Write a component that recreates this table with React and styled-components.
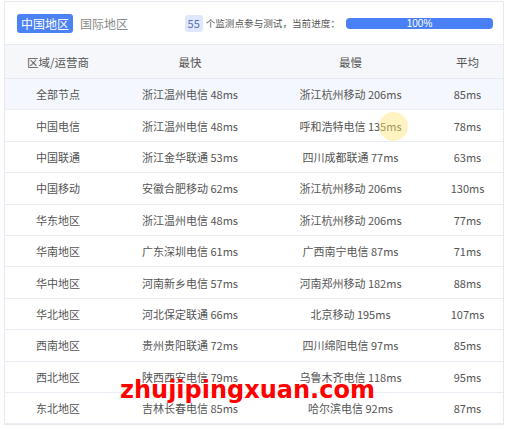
import React from 'react'
import styled, { createGlobalStyle } from 'styled-components'

const rows = [
  ['全部节点', '浙江温州电信 48ms', '浙江杭州移动 206ms', '85ms'],
  ['中国电信', '浙江温州电信 48ms', '呼和浩特电信 135ms', '78ms'],
  ['中国联通', '浙江金华联通 53ms', '四川成都联通 77ms', '63ms'],
  ['中国移动', '安徽合肥移动 62ms', '浙江杭州移动 206ms', '130ms'],
  ['华东地区', '浙江温州电信 48ms', '浙江杭州移动 206ms', '77ms'],
  ['华南地区', '广东深圳电信 61ms', '广西南宁电信 87ms', '71ms'],
  ['华中地区', '河南新乡电信 57ms', '河南郑州移动 182ms', '88ms'],
  ['华北地区', '河北保定联通 66ms', '北京移动 195ms', '107ms'],
  ['西南地区', '贵州贵阳联通 72ms', '四川绵阳电信 97ms', '85ms'],
  ['西北地区', '陕西西安电信 79ms', '乌鲁木齐电信 118ms', '95ms'],
  ['东北地区', '吉林长春电信 85ms', '哈尔滨电信 92ms', '87ms'],
]

const App = () => {
  return (
    <>
      <Global />
      <Card>
        <TopBar>
          <Tab active>中国地区</Tab>
          <Tab>国际地区</Tab>
          <Status>
            <Badge>55</Badge>
            <StatusText>个监测点参与测试，当前进度：</StatusText>
            <Progress>100%</Progress>
          </Status>
        </TopBar>
        <HeadRow>
          <Cell>区域/运营商</Cell>
          <Cell>最快</Cell>
          <Cell>最慢</Cell>
          <Cell>平均</Cell>
        </HeadRow>
        {rows.map((r, i) => (
          <Row key={i} highlight={i === 0}>
            {r.map((c, j) => <Cell key={j}>{c}</Cell>)}
          </Row>
        ))}
        <Cursor />
        <Watermark>zhujipingxuan.com</Watermark>
      </Card>
    </>
  )
}

const Global = createGlobalStyle`
  body {
    margin: 0;
    background: #fff;
    font-family: "Noto Sans CJK SC", "Noto Sans", sans-serif;
  }
`

const Card = styled.div`
  position: relative;
  box-sizing: border-box;
  width: 500px;
  margin: 1px 0 0 4px;
  border: 1px solid #e6eaf0;
  background: #fff;
`

const TopBar = styled.div`
  display: flex;
  align-items: center;
  height: 42px;
  padding: 0 10px 0 12px;
  border-bottom: 1px solid #e8edf3;
`

const Tab = styled.div`
  height: 19px;
  line-height: 19px;
  padding: 0 4px;
  margin-right: 3px;
  border-radius: 3px;
  font-size: 12px;
  background: ${p => p.active ? '#4b82f6' : 'transparent'};
  color: ${p => p.active ? '#fff' : '#8a8a8a'};
`

const Status = styled.div`
  display: flex;
  align-items: center;
  margin-left: auto;
`

const Badge = styled.div`
  width: 18px;
  height: 17px;
  line-height: 17px;
  text-align: center;
  border-radius: 3px;
  background: #dfe8fb;
  color: #5872b8;
  font-size: 11px;
`

const StatusText = styled.div`
  margin-left: 3px;
  font-size: 9.6px;
  color: #555;
`

const Progress = styled.div`
  width: 147px;
  height: 11px;
  line-height: 11px;
  margin-left: 6px;
  border-radius: 4px;
  background: #4a80f5;
  color: #fff;
  text-align: center;
  font-size: 10px;
  font-family: "Liberation Sans", sans-serif;
`

const HeadRow = styled.div`
  display: grid;
  grid-template-columns: 106px 158px 163px 1fr;
  align-items: center;
  height: 33px;
  background: #f5f7fa;
  border-bottom: 1px solid #e6ebf1;
  color: #555;
  font-size: 11.5px;
`

const Row = styled.div`
  display: grid;
  grid-template-columns: 106px 158px 163px 1fr;
  align-items: center;
  height: 30.4px;
  border-bottom: 1px solid #e8edf3;
  background: ${p => p.highlight ? '#f4f7fd' : '#fff'};
  color: #555;
  font-size: 11px;
  &:last-of-type {
    border-bottom: none;
  }
`

const Cell = styled.div`
  text-align: center;
  white-space: nowrap;
`

const Cursor = styled.div`
  position: absolute;
  left: 374px;
  top: 110px;
  width: 29px;
  height: 29px;
  border-radius: 50%;
  background: rgba(255, 228, 120, 0.45);
`

const Watermark = styled.div`
  position: absolute;
  left: 115px;
  top: 376px;
  line-height: 1;
  font-size: 24px;
  font-weight: bold;
  font-family: "DejaVu Sans", sans-serif;
  color: #f00;
`

export default App
